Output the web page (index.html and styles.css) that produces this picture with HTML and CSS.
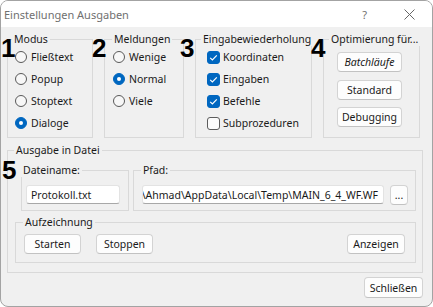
FILE: index.html
```html
<!DOCTYPE html>
<html lang="de">
<head>
    <meta charset="UTF-8">
    <meta name="viewport" content="width=device-width, initial-scale=1.0">
    <title>Einstellungen Ausgaben</title>
    <link rel="stylesheet" href="styles.css">
</head>
<body>
    <div class="window">
        <div class="titlebar">
            <span class="title">Einstellungen Ausgaben</span>
            <span class="help">?</span>
            <svg class="close" width="11" height="11" viewBox="0 0 11 11">
                <path d="M0.5 0.5L10.5 10.5M10.5 0.5L0.5 10.5" stroke="#666" stroke-width="1" fill="none"/>
            </svg>
        </div>

        <div class="content">
            <div class="top-row">
                <fieldset class="group modus">
                    <legend>Modus</legend>
                    <div class="option"><span class="radio"></span>Fließtext</div>
                    <div class="option"><span class="radio"></span>Popup</div>
                    <div class="option"><span class="radio"></span>Stoptext</div>
                    <div class="option"><span class="radio checked"></span>Dialoge</div>
                </fieldset>

                <fieldset class="group meldungen">
                    <legend>Meldungen</legend>
                    <div class="option"><span class="radio"></span>Wenige</div>
                    <div class="option"><span class="radio checked"></span>Normal</div>
                    <div class="option"><span class="radio"></span>Viele</div>
                </fieldset>

                <fieldset class="group eingabe">
                    <legend>Eingabewiederholung</legend>
                    <div class="option"><span class="check checked"><svg width="13" height="13" viewBox="0 0 13 13"><path d="M3.2 6.8L5.4 9L9.8 4.4" stroke="#fff" stroke-width="1.2" fill="none"/></svg></span>Koordinaten</div>
                    <div class="option"><span class="check checked"><svg width="13" height="13" viewBox="0 0 13 13"><path d="M3.2 6.8L5.4 9L9.8 4.4" stroke="#fff" stroke-width="1.2" fill="none"/></svg></span>Eingaben</div>
                    <div class="option"><span class="check checked"><svg width="13" height="13" viewBox="0 0 13 13"><path d="M3.2 6.8L5.4 9L9.8 4.4" stroke="#fff" stroke-width="1.2" fill="none"/></svg></span>Befehle</div>
                    <div class="option"><span class="check"></span>Subprozeduren</div>
                </fieldset>

                <fieldset class="group optimierung">
                    <legend>Optimierung für...</legend>
                    <button class="btn wide italic">Batchläufe</button>
                    <button class="btn wide">Standard</button>
                    <button class="btn wide">Debugging</button>
                </fieldset>
            </div>

            <fieldset class="group ausgabe">
                <legend>Ausgabe in Datei</legend>
                <div class="file-row">
                    <fieldset class="group dateiname">
                        <legend>Dateiname:</legend>
                        <div class="textbox name">Protokoll.txt</div>
                    </fieldset>
                    <fieldset class="group pfad">
                        <legend>Pfad:</legend>
                        <div class="path-row">
                            <div class="textbox path"><span>C:\Users\Ahmad\AppData\Local\Temp\MAIN_6_4_WF.WF</span></div>
                            <button class="btn browse">...</button>
                        </div>
                    </fieldset>
                </div>
                <fieldset class="group aufzeichnung">
                    <legend>Aufzeichnung</legend>
                    <div class="record-row">
                        <button class="btn">Starten</button>
                        <button class="btn">Stoppen</button>
                        <button class="btn show">Anzeigen</button>
                    </div>
                </fieldset>
            </fieldset>

            <div class="footer">
                <button class="btn close-btn">Schließen</button>
            </div>
        </div>

        <!-- Nummern über den Gruppen -->
        <span class="marker m1">1</span>
        <span class="marker m2">2</span>
        <span class="marker m3">3</span>
        <span class="marker m4">4</span>
        <span class="marker m5">5</span>
    </div>
</body>
</html>
```

FILE: styles.css
```css
body {
    margin: 0;
    background-color: #fff;
    font-family: "Noto Sans", sans-serif;
    font-size: 10.5px;
    color: #1a1a1a;
}
.window {
    position: relative;
    width: 431px;
    height: 305px;
    border: 1px solid #a3a3a3;
    border-radius: 8px;
    overflow: hidden;
    background-color: #f0f0f0;
}
.titlebar {
    height: 26px;
    background-color: #fff;
    display: flex;
    align-items: center;
    padding-left: 3px;
}
.title {
    flex: 1;
    font-size: 11px;
    color: #707070;
}
.help {
    font-size: 11px;
    color: #707070;
    margin-right: 37px;
}
.close {
    margin-right: 17px;
}
.content {
    padding: 5px 9px 0 6px;
}
.top-row {
    display: grid;
    grid-template-columns: 86px 80px 117px 97px;
    column-gap: 11px;
}
.group {
    margin: 0;
    border: 1px solid #d9d9d9;
    padding: 0 6px 3px 7px;
    min-width: 0;
}
.group legend {
    padding: 0 2px;
    margin-left: -3px;
    line-height: 14px;
    white-space: nowrap;
}
.meldungen {
    padding-left: 8px;
}
.meldungen legend {
    margin-left: -1px;
}
.eingabe {
    padding-left: 11px;
}
.eingabe legend {
    margin-left: -6px;
}
.option {
    display: flex;
    align-items: center;
    height: 22px;
    white-space: nowrap;
}
.radio {
    width: 10px;
    height: 10px;
    border: 1px solid #595959;
    border-radius: 50%;
    background-color: #f7f7f7;
    margin-right: 4px;
    position: relative;
}
.radio.checked {
    border-color: #0067c0;
    background-color: #0067c0;
}
.radio.checked::after {
    content: "";
    position: absolute;
    left: 3px;
    top: 3px;
    width: 4px;
    height: 4px;
    border-radius: 50%;
    background-color: #fff;
}
.check {
    width: 11px;
    height: 11px;
    border: 1px solid #5c5c5c;
    border-radius: 3px;
    background-color: #fbfbfb;
    margin-right: 3px;
    position: relative;
}
.check.checked {
    border-color: #0067c0;
    background-color: #0067c0;
}
.check svg {
    position: absolute;
    left: -1px;
    top: -1px;
}
.optimierung {
    display: flex;
    flex-direction: column;
    align-items: flex-start;
    gap: 7.5px;
    padding: 0 0 3px 13px;
}
.optimierung legend {
    margin-left: -8px;
}
.optimierung .btn:first-of-type {
    margin-top: 6px;
}
.btn {
    font-family: inherit;
    font-size: 10.5px;
    color: #1a1a1a;
    height: 20px;
    padding: 0;
    background-color: #fdfdfd;
    border: 1px solid #d3d3d3;
    border-bottom-color: #c2c2c2;
    border-radius: 4px;
    white-space: nowrap;
}
.btn.wide {
    width: 65px;
}
.italic {
    font-style: italic;
}
.ausgabe {
    margin-top: 5px;
    padding: 0 6px 9px 7px;
}
.ausgabe legend {
    margin-left: -1px;
}
.file-row {
    display: grid;
    grid-template-columns: 108px 283px;
    column-gap: 4px;
    margin: 6px 0 0 6px;
}
.dateiname {
    padding: 0 8px 6px 4px;
}
.dateiname legend {
    margin-left: -5px;
}
.pfad {
    padding: 0 7px 6px 8px;
}
.pfad legend {
    margin-left: -1px;
}
.textbox {
    height: 17px;
    margin-top: 8px;
    background-color: #fff;
    border: 1px solid #e3e3e3;
    border-bottom-color: #a8a8a8;
    border-radius: 3px;
    display: flex;
    align-items: center;
    white-space: nowrap;
    overflow: hidden;
}
.textbox.name {
    width: 88px;
    padding-left: 4px;
}
.path-row {
    display: flex;
    align-items: flex-end;
    gap: 6px;
}
.textbox.path {
    width: 235px;
    padding-right: 5px;
    justify-content: flex-end;
}
.textbox.path span {
    flex-shrink: 0;
}
.browse {
    width: 18px;
    margin-bottom: -1px;
}
.aufzeichnung {
    margin-top: 4px;
    padding: 0 10px 8px 8px;
}
.aufzeichnung legend {
    margin-left: -1px;
}
.record-row {
    display: flex;
    gap: 15px;
    margin-top: 5px;
}
.record-row .btn {
    width: 57px;
}
.record-row .show {
    width: 58px;
    margin-left: auto;
}
.footer {
    display: flex;
    justify-content: flex-end;
    margin-top: 4px;
}
.close-btn {
    width: 59px;
    height: 21px;
}
.marker {
    position: absolute;
    font-family: "Liberation Sans", Arial, sans-serif;
    font-weight: bold;
    font-size: 26px;
    line-height: 1;
    color: #000;
}
.m1 { left: 0; top: 34px; }
.m2 { left: 91px; top: 34px; }
.m3 { left: 179px; top: 34px; }
.m4 { left: 310px; top: 34px; }
.m5 { left: 1px; top: 156px; }
```
